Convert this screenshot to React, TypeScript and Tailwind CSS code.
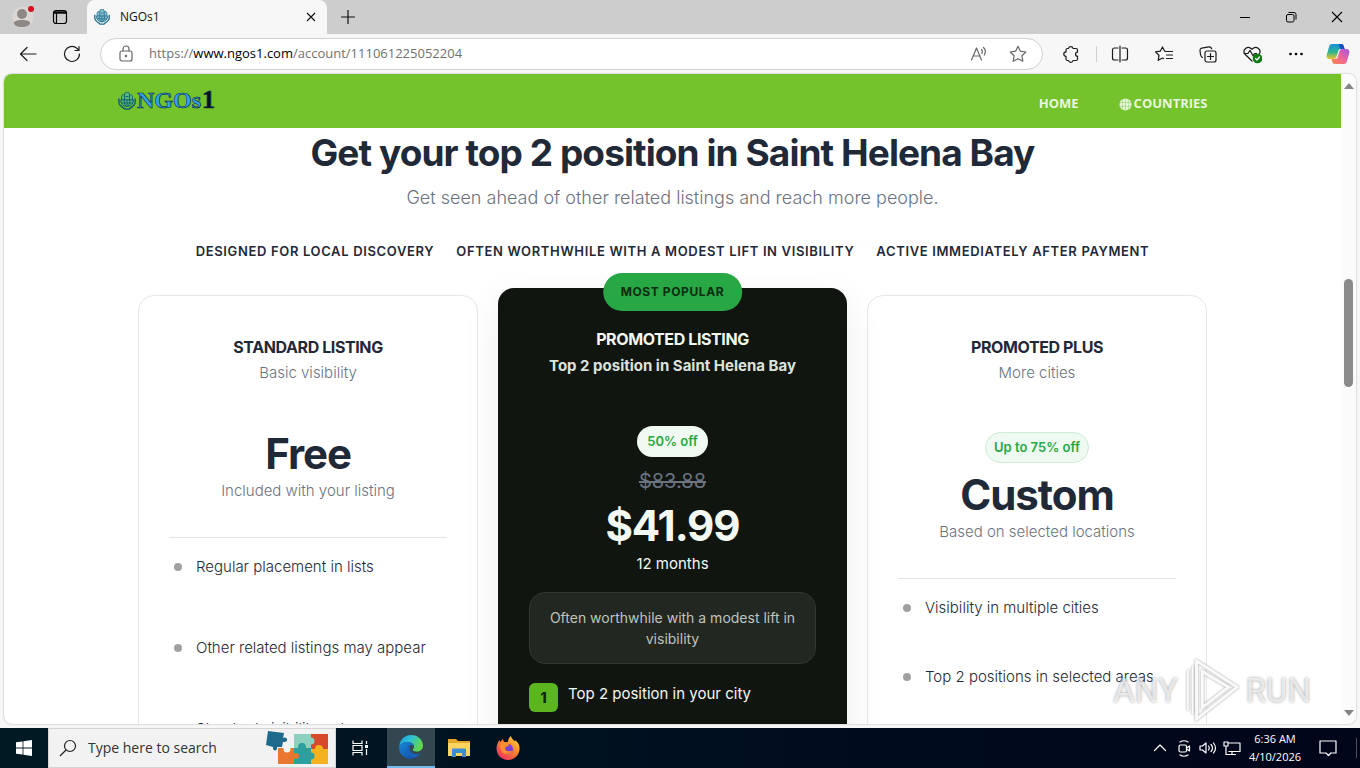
import type { ReactNode } from 'react';
import { clsx } from 'clsx';

interface Plan {
  name: string;
  tagline: string;
  badge?: string;
  price: string;
  note: string;
  features: string[];
  listClass: string;
}

const standardPlan: Plan = {
  name: 'STANDARD LISTING',
  tagline: 'Basic visibility',
  price: 'Free',
  note: 'Included with your listing',
  features: ['Regular placement in lists', 'Other related listings may appear', 'Standard visibility only'],
  listClass: 'gap-[57px]',
};

const plusPlan: Plan = {
  name: 'PROMOTED PLUS',
  tagline: 'More cities',
  badge: 'Up to 75% off',
  price: 'Custom',
  note: 'Based on selected locations',
  features: ['Visibility in multiple cities', 'Top 2 positions in selected areas'],
  listClass: 'gap-[45px]',
};

const highlights = [
  'DESIGNED FOR LOCAL DISCOVERY',
  'OFTEN WORTHWHILE WITH A MODEST LIFT IN VISIBILITY',
  'ACTIVE IMMEDIATELY AFTER PAYMENT',
];

/* Thin line icon on a 20px grid */
function Line({ children, className }: { children: ReactNode; className?: string }) {
  return (
    <svg
      viewBox="0 0 20 20"
      className={clsx('h-5 w-5 shrink-0', className)}
      fill="none"
      stroke="currentColor"
      strokeWidth="1.2"
      strokeLinecap="round"
      strokeLinejoin="round"
      aria-hidden="true"
    >
      {children}
    </svg>
  );
}

/* Globe held between two hands, with three people on top */
function GlobeHands({ className, fill, stroke }: { className?: string; fill: string; stroke: string }) {
  return (
    <svg viewBox="0 0 18 18" className={className} fill="none" stroke={stroke} strokeWidth="0.9" aria-hidden="true">
      <path d="M3.500 8V4.500a2 2 0 0 1 3-1.500V2.500a2.500 2.500 0 0 1 5 0V3a2 2 0 0 1 3 1.500V8z" fill={fill} />
      <path d="M6.500 3v5M11.500 3v5M7.500 4.500h3" />
      <path d="M2.500 8h13a6.500 6.500 0 0 1-13 0z" fill={fill} />
      <path d="M9 8v7M3 11h12M6 8q0 4 2 6.500M12 8q0 4-2 6.500" />
      <path d="M.9 6.500v4c0 2.500 3 4.500 5.500 6M17.100 6.500v4c0 2.500-3 4.500-5.500 6M6 17h6" strokeWidth="1.500" />
    </svg>
  );
}

function TabStrip() {
  return (
    <div className="flex h-[34px] shrink-0 items-stretch bg-[#cdcdcd] font-['Open_Sans',sans-serif] text-[#111]">
      <div className="flex w-[87px] items-center gap-[18px] pl-3">
        <button aria-label="Profile">
          <svg viewBox="0 0 22 22" className="h-[22px] w-[22px]" aria-hidden="true">
            <circle cx="11" cy="11" r="10.500" fill="#dad7d5" />
            <circle cx="10" cy="8" r="5" fill="#8d8886" />
            <path d="M2 17c0-2 3-3 8-3s8 1 8 3-3 4-8 4-8-2-8-4z" fill="#8d8886" />
            <circle cx="19" cy="3" r="3" fill="#d80f1e" />
          </svg>
        </button>
        <button aria-label="Tab actions">
          <svg viewBox="0 0 16 16" className="h-4 w-4" fill="none" stroke="#000" strokeWidth="1.200" aria-hidden="true">
            <rect x="1.500" y="1.500" width="13" height="13" rx="2.500" />
            <path d="M4.500 4v10" />
            <path d="M2 3.500h12" strokeWidth="2.400" />
          </svg>
        </button>
      </div>
      <div className="flex w-60 items-center rounded-t-lg bg-[#f7f7f7] pr-2 pl-[7px]">
        <GlobeHands className="h-4 w-4" fill="#86bccd" stroke="#24718f" />
        <span className="ml-[10px] flex-1 text-xs">NGOs1</span>
        <button aria-label="Close tab">
          <svg viewBox="0 0 16 16" className="h-4 w-4" stroke="#111" strokeWidth="1.100" aria-hidden="true">
            <path d="M4 4l8 8M12 4l-8 8" />
          </svg>
        </button>
      </div>
      <button aria-label="New tab" className="px-3">
        <svg viewBox="0 0 18 18" className="h-[18px] w-[18px]" stroke="#111" strokeWidth="1.200" aria-hidden="true">
          <path d="M9 2v14M2 9h14" />
        </svg>
      </button>
      <div className="ml-auto flex">
        <button aria-label="Minimize" className="flex w-[46px] items-center justify-center">
          <svg viewBox="0 0 12 12" className="h-3 w-3" stroke="#000" aria-hidden="true">
            <path d="M1 6.500h10" />
          </svg>
        </button>
        <button aria-label="Restore" className="flex w-[46px] items-center justify-center">
          <svg viewBox="0 0 12 12" className="h-3 w-3" fill="none" stroke="#000" aria-hidden="true">
            <rect x="1.500" y="3.500" width="7.500" height="7.500" rx="1.500" />
            <path d="M3.500 1.500h5.500a2 2 0 0 1 2 2v5" />
          </svg>
        </button>
        <button aria-label="Close" className="flex w-[46px] items-center justify-center">
          <svg viewBox="0 0 12 12" className="h-3 w-3" stroke="#000" strokeWidth="1.100" aria-hidden="true">
            <path d="M1 1l10 10M11 1L1 11" />
          </svg>
        </button>
      </div>
    </div>
  );
}

function Toolbar() {
  return (
    <div className="flex h-10 shrink-0 items-center bg-[#f7f7f7] pr-[10px] pl-[18px] text-[#1a1a1a]">
      <button aria-label="Back" className="mr-6">
        <Line><path d="M2.500 10H18M9 3.500L2.500 10 9 16.500" /></Line>
      </button>
      <button aria-label="Refresh" className="mr-[18px]">
        <Line><path d="M17.500 10A7.500 7.500 0 1 1 14.800 4.200L17 6.400M17 2.500v4h-4" /></Line>
      </button>
      <div className="flex h-8 flex-1 items-center rounded-full border border-[#d0d0d5] bg-white pr-[14px] pl-[15px]">
        <Line className="text-[#666]">
          <rect x="4" y="7" width="12" height="10" rx="2" />
          <path d="M7 7V5a3 3 0 0 1 6 0v2" />
          <circle cx="10" cy="12" r="0.600" fill="currentColor" />
        </Line>
        <p className="ml-[13px] flex-1 font-['Open_Sans',sans-serif] text-[13px] text-[#717171]">
          https://<span className="text-black">www.ngos1.com</span>/account/111061225052204
        </p>
        <button aria-label="Read aloud" className="mr-[19px]">
          <Line className="text-[#666]">
            <path d="M2.500 16L7.500 4l5 12M4.300 12h6.500M12.500 5.500c1 1 1 2.500.5 4M14.500 3.500c2.200 2 2.200 5 .8 7.500" />
          </Line>
        </button>
        <button aria-label="Add to favorites">
          <Line className="text-[#666]">
            <path d="M10 2.300l2.400 4.900 5.400.8-3.900 3.800.9 5.400-4.800-2.500-4.800 2.500.9-5.400L2.200 8l5.400-.8z" />
          </Line>
        </button>
      </div>
      <button aria-label="Extensions" className="ml-[18px]">
        <Line>
          <path d="M7.500 4.500a2.300 2.300 0 0 1 4.500 0h3a1.500 1.500 0 0 1 1.500 1.500V8.200a1.900 1.900 0 1 0 0 3.900V15a1.500 1.500 0 0 1-1.500 1.500h-3a2.300 2.300 0 0 1-4.500 0H6.500A1.500 1.500 0 0 1 5 15v-2.700a2.200 2.200 0 0 1 0-4.400V6a1.500 1.500 0 0 1 1.500-1.500z" />
        </Line>
      </button>
      <span className="mr-[13px] ml-[15px] h-4 w-px bg-[#cfcfcf]" />
      <button aria-label="Split screen" className="mr-6">
        <Line><path d="M8 4H4.500a2 2 0 0 0-2 2v8a2 2 0 0 0 2 2H8M12 4h3.500a2 2 0 0 1 2 2v8a2 2 0 0 1-2 2H12M10 2v16" /></Line>
      </button>
      <button aria-label="Favorites" className="mr-6">
        <Line><path d="M18.500 7.500h-6l-1.800-.3L8.500 3 6.300 7.200l-4.800.7L5 11.300l-.8 5 4.300-2.300 1 .5M12.500 11h6M12.500 14.500h6" /></Line>
      </button>
      <button aria-label="Collections" className="mr-6">
        <Line>
          <rect x="7" y="7" width="11" height="11" rx="2" />
          <path d="M12.500 9.500v6M9.500 12.500h6M4.500 13.500C3 13 2.800 12 2.500 10.500L2 6.500a2 2 0 0 1 1.700-2.300l7-1.400c1.800-.2 2.600.7 3 2" />
        </Line>
      </button>
      <button aria-label="Browser essentials" className="mr-6">
        <Line>
          <path d="M10 17L3 10.200C-.2 6 5.500 1 10 5.200 14.500 1 20.200 6 17 10.200M2 9.500h4l2-3.200 3 5.500 1.500-2.300h2" />
          <circle cx="15.500" cy="14.500" r="4.200" fill="#0f7b15" stroke="#0f7b15" />
          <path d="M13.500 14.500l1.500 1.500 2.500-3" stroke="#fff" />
        </Line>
      </button>
      <button aria-label="Settings and more" className="mr-5">
        <svg viewBox="0 0 20 20" className="h-5 w-5" aria-hidden="true">
          <circle cx="4.500" cy="10" r="1.300" /><circle cx="10" cy="10" r="1.300" /><circle cx="15.500" cy="10" r="1.300" />
        </svg>
      </button>
      <button aria-label="Copilot">
        <svg viewBox="0 0 24 24" className="h-6 w-6" aria-hidden="true">
          <defs>
            <linearGradient id="cp1" x1="0" y1="0" x2="0" y2="1">
              <stop offset="0" stopColor="#1690e0" /><stop offset=".55" stopColor="#2fb58d" /><stop offset="1" stopColor="#f2c12d" />
            </linearGradient>
            <linearGradient id="cp2" x1="1" y1="0" x2="0" y2="1">
              <stop offset="0" stopColor="#a455e8" /><stop offset=".5" stopColor="#ee6599" /><stop offset="1" stopColor="#fb8b45" />
            </linearGradient>
          </defs>
          <path d="M6 2h9c2 0 2.500 1 3 3l.6 2H15c-2 0-2.600 1-3 3l-1.200 4c-.5 2-1.300 3-3 3H4c-3 0-4-2-3-5l2-7c.6-2 1.200-3 3-3z" fill="url(#cp1)" />
          <path d="M13 2h2c2 0 2.500 1 3 3l.6 2H14z" fill="#1750c8" />
          <path d="M18 22H9c-2 0-2.500-1-3-3l-.6-2H9c2 0 2.600-1 3-3l1.200-4c.5-2 1.300-3 3-3H20c3 0 4 2 3 5l-2 7c-.6 2-1.200 3-3 3z" fill="url(#cp2)" />
        </svg>
      </button>
    </div>
  );
}

function SiteHeader() {
  return (
    <header className="bg-[#74c22c]">
      <div className="mx-auto flex h-[54px] max-w-[1140px] items-center justify-between pr-[35px] pl-[15px]">
        <a href="#home" className="flex items-center gap-px">
          <GlobeHands className="h-[18px] w-[18px]" fill="#55b67e" stroke="#12606a" />
          <svg viewBox="0 0 78 24" className="h-6 w-[78px]" role="img" aria-label="NGOs1">
            <g fontFamily="Liberation Serif, serif" fontWeight="700" stroke="#0d3050" strokeWidth="0.700">
              <text x="0" y="19" fontSize="24" fill="#35a4ea">
                NGOs
              </text>
              <text x="65" y="19" fontSize="26" fill="#04121c">
                1
              </text>
            </g>
          </svg>
        </a>
        <nav className="flex gap-10 pt-[6px] font-['Open_Sans',sans-serif] text-[13px] font-bold text-[#eaf7dc]">
          <a href="#home">HOME</a>
          <a href="#countries" className="flex items-center gap-[2px]">
            <svg viewBox="0 0 14 14" className="h-[13px] w-[13px]" aria-hidden="true">
              <circle cx="7" cy="7" r="6.500" fill="#eaf7dc" />
              <path d="M7 .5v13M.5 5h13M.5 9h13M4.500 1.500c-1.500 3.500-1.500 7.500 0 11M9.500 1.500c1.500 3.500 1.500 7.500 0 11" fill="none" stroke="#9ccf6d" strokeWidth=".7" />
            </svg>
            COUNTRIES
          </a>
        </nav>
      </div>
    </header>
  );
}

function PlanCard({ plan }: { plan: Plan }) {
  return (
    <article className="mt-[7px] min-h-[520px] rounded-2xl border border-[#e5e7eb] bg-white px-[30px] pt-[39px] text-center">
      <h2 className="text-base leading-6 font-bold tracking-tight">{plan.name}</h2>
      <p className="mt-[2px] text-[15px] leading-6 font-light text-[#6b7280]">{plan.tagline}</p>
      <div className={clsx('border-b border-[#e2e4e8] pb-[34px]', plan.badge ? 'pt-[47px]' : 'pt-[45px]')}>
        {plan.badge && (
          <span className="mx-auto mb-2 flex h-[31px] w-fit items-center rounded-full border border-[#cdebd4] bg-[#eef9f1] px-2 text-[13px] font-semibold text-[#28a745]">
            {plan.badge}
          </span>
        )}
        <p className="text-[42px] leading-[48px] font-bold tracking-tight">{plan.price}</p>
        <p className="mt-px text-[15px] leading-6 font-light text-[#6b7280]">{plan.note}</p>
      </div>
      <ul className={clsx('flex flex-col pt-[17px] pl-[5px] text-left text-[15px] leading-6 font-light', plan.listClass)}>
        {plan.features.map((feature) => (
          <li key={feature} className="flex items-center gap-[14px] whitespace-nowrap">
            <span className="h-2 w-2 rounded-full bg-[#a0a0a0]" />
            {feature}
          </li>
        ))}
      </ul>
    </article>
  );
}

function PromotedCard() {
  return (
    <article className="relative min-h-[527px] rounded-2xl bg-[#101510] px-[31px] pt-[39px] text-center text-[#f3f8f2] shadow-[0_12px_40px_rgba(0,0,0,0.07)]">
      <span className="absolute -top-[15px] left-1/2 flex h-[38px] -translate-x-1/2 items-center rounded-full bg-[#28a745] px-[18px] text-xs font-bold tracking-wider whitespace-nowrap text-[#0b2d10]">
        MOST POPULAR
      </span>
      <h2 className="text-base leading-6 font-bold tracking-tight">PROMOTED LISTING</h2>
      <p className="mt-[3px] text-[15px] leading-6 font-bold text-[#dde1dc]">Top 2 position in Saint Helena Bay</p>
      <span className="mx-auto mt-12 flex h-[31px] w-fit items-center rounded-full bg-[#f0faf2] px-[10px] text-[13px] font-semibold text-[#28a745]">
        50% off
      </span>
      <p className="mt-[10px] text-xl leading-7 text-[#6b7280] line-through">$83.88</p>
      <p className="mt-[7px] text-[42px] leading-[48px] font-bold tracking-tight">$41.99</p>
      <p className="mt-[2px] text-[15px] leading-6">12 months</p>
      <p className="mt-4 rounded-2xl border border-[#323732] bg-[#222722] px-4 py-[14px] text-sm leading-[21px] text-[#bfc4be]">
        Often worthwhile with a modest lift in visibility
      </p>
      <ul className="mt-[19px] flex flex-col gap-3 text-left text-[15px] leading-[22px]">
        <li className="flex gap-[10px]">
          <span className="flex h-[29px] w-[29px] items-center justify-center rounded-md bg-[#5bb51f] text-sm font-extrabold text-[#0d2608]">1</span>
          Top 2 position in your city
        </li>
      </ul>
    </article>
  );
}

function Watermark() {
  return (
    <div className="pointer-events-none absolute right-[45px] bottom-[2px] flex items-center gap-[5px] font-['Roboto',sans-serif] text-[33px] leading-none text-white/70 [text-shadow:0_0_3px_rgba(0,0,0,0.4)]">
      <span>ANY</span>
      <svg viewBox="0 0 60 66" className="h-16 w-[58px] drop-shadow-[0_0_1px_rgba(0,0,0,0.4)]" fill="none" stroke="#fafafa" strokeWidth="3" aria-hidden="true">
        <path d="M14 3l42 27-42 33z" />
        <path d="M20 14v37l27-21z" />
        <path d="M5 12v42M10 8v50" strokeWidth="2" />
      </svg>
      <span>RUN</span>
    </div>
  );
}

function Scrollbar() {
  return (
    <div className="flex w-[15px] shrink-0 flex-col items-center bg-[#fbfbfb] pt-[9px] pb-2" aria-hidden="true">
      <svg viewBox="0 0 10 6" className="h-[6px] w-[10px]" fill="#858585"><path d="M5 0l5 6H0z" /></svg>
      <div className="mt-[190px] h-[108px] w-[9px] rounded-full bg-[#8b8b8b]" />
      <svg viewBox="0 0 10 6" className="mt-auto h-[6px] w-[10px]" fill="#858585"><path d="M5 6L0 0h10z" /></svg>
    </div>
  );
}

function Taskbar() {
  return (
    <footer className="flex h-10 shrink-0 bg-linear-to-r from-[#001a24] to-[#00051a] font-['Open_Sans',sans-serif] text-white">
      <button aria-label="Start" className="flex w-12 items-center justify-center">
        <svg viewBox="0 0 16 16" className="h-4 w-4" fill="#fff" aria-hidden="true">
          <path d="M0 2.300L6.600 1.400v6.200H0zM7.400 1.300L16 0v7.600H7.400zM0 8.400h6.600v6.200L0 13.700zM7.400 8.400H16V16l-8.600-1.300z" />
        </svg>
      </button>
      <label className="flex w-72 items-center border border-[#d5d5d5] bg-[#f2f2f2] pl-[10px] text-[#222]">
        <svg viewBox="0 0 18 18" className="h-[18px] w-[18px] shrink-0" fill="none" stroke="#222" strokeWidth="1.200" aria-hidden="true">
          <circle cx="11" cy="7" r="5.500" /><path d="M7 11l-6 6" />
        </svg>
        <input type="text" aria-label="Search" placeholder="Type here to search" className="ml-[11px] w-[177px] bg-transparent text-sm outline-none placeholder:text-[#333]" />
        <svg viewBox="0 0 64 36" className="h-9 w-16 shrink-0" aria-hidden="true">
          <path d="M29 4h17v14H29z" fill="#8ed0c0" />
          <path d="M46 4h17v15H46z" fill="#d8482a" />
          <path d="M13 18h18v16H13z" fill="#e9772f" />
          <path d="M29 18h18v16H29z" fill="#2e9f9f" />
          <path d="M46 19h17v15H46z" fill="#f5b21f" />
          <circle cx="37" cy="17" r="4" fill="#2e9f9f" /><circle cx="46" cy="11" r="3.500" fill="#8ed0c0" />
          <circle cx="54" cy="19" r="4" fill="#f5b21f" /><circle cx="46" cy="26" r="3.500" fill="#2e9f9f" />
          <circle cx="22" cy="19" r="3.500" fill="#f2f2f2" /><circle cx="31" cy="26" r="3" fill="#e9772f" />
          <path d="M3 1l16 2-1 5c4-2 6 3 2 4l-2 0-1 5-5 0c1 5-5 4-4 0L1 15z" fill="#1e6a8c" />
        </svg>
      </label>
      <button aria-label="Task view" className="flex w-12 items-center justify-center">
        <svg viewBox="0 0 18 18" className="h-[18px] w-[18px]" fill="none" stroke="#fff" strokeWidth="1.200" aria-hidden="true">
          <path d="M2 1.500v3h9v-3M2 16.500v-3h9v3M2 6.500h9v5H2zM15.500 2v3M15.500 10v6" />
          <path d="M14 6h3v3h-3z" fill="#fff" stroke="none" />
        </svg>
      </button>
      <button aria-label="Microsoft Edge" className="ml-[3px] flex w-12 items-center justify-center border-b-2 border-[#76b9ed] bg-[#34464f]">
        <svg viewBox="0 0 24 24" className="h-6 w-6" aria-hidden="true">
          <defs>
            <linearGradient id="edgeTop" x1="0" y1="0" x2="1" y2=".4">
              <stop offset="0" stopColor="#1c9de2" /><stop offset=".5" stopColor="#2fc2d4" /><stop offset="1" stopColor="#62d64b" />
            </linearGradient>
            <linearGradient id="edgeLow" x1="0" y1="0" x2="1" y2="1">
              <stop offset="0" stopColor="#1686d9" /><stop offset="1" stopColor="#104a9e" />
            </linearGradient>
          </defs>
          <path d="M.2 11C1 4.500 6 0 12 0c7 0 12 5 12 10.500 0 4-3 6-6.500 6-2.500 0-3.800-.8-3.800-1.500 0-.8 1.300-1.200 1.300-3.200C15 9 12 7 8.500 7 4.500 7 1.500 9 .2 11z" fill="url(#edgeTop)" />
          <path d="M.1 12C.8 9 4 7 8.500 7c3.500 0 5.800 1.600 6.400 3.600-4-1.600-7 1.400-6.200 5 .8 3.800 4.800 6.400 10 5.200C16.500 23 14.500 24 12 24 5 24-.3 18.500.1 12z" fill="url(#edgeLow)" />
          <path d="M9 12c-3 5 1 10.500 6.500 10.200 3-.2 5-1.700 6.800-4-2.800 1.600-7.300 1.400-9.800-.7C11 16 10 14 11 11.500z" fill="#1763b8" />
        </svg>
      </button>
      <button aria-label="File Explorer" className="flex w-12 items-center justify-center">
        <svg viewBox="0 0 22 20" className="h-5 w-[22px]" aria-hidden="true">
          <path d="M0 1h8l2 2h12v15H0z" fill="#e5a82a" />
          <path d="M0 5h22v13H0z" fill="#fcd462" />
          <path d="M4 11.500q0-1 1-1h12q1 0 1 1V19h-4v-4H8v4H4z" fill="#3b8fd0" />
        </svg>
      </button>
      <button aria-label="Firefox" className="flex w-[50px] items-center justify-center">
        <svg viewBox="0 0 24 24" className="h-6 w-6" aria-hidden="true">
          <defs>
            <linearGradient id="fox" x1="1" y1="0" x2=".2" y2="1">
              <stop offset="0" stopColor="#ffe84a" /><stop offset=".45" stopColor="#ff8a2a" /><stop offset="1" stopColor="#ef2d62" />
            </linearGradient>
          </defs>
          <path d="M3.500 4c.2 1 .5 1.500 1 2 .6-1.300 1.500-2.300 2.500-3 0 1.200.4 2 1.500 3H12c0-2.500 1-4.500 3-6 .5 2.500 2 3.700 4 5.500 0-.8-.2-1-.3-1.500C22 6 24 9 23.500 13.500 23 19.500 18 24 12 24 5.500 24 .5 19 .5 12.500.5 9 2 6 3.500 4z" fill="url(#fox)" />
          <circle cx="12" cy="13" r="5" fill="#7a3fd6" />
          <path d="M4 8c3-2 6-2 8 0l1.500 1.300c-2 1.200-3 1.200-4 2-1 1.700.5 4 3 4 1.500 0 2.500-.7 3.500 0-1 2-4 3.500-7 2.500C5.500 17 4 13 4 8z" fill="#ff8f2c" />
        </svg>
      </button>
      <div className="ml-auto flex items-center">
        <div className="flex items-center gap-1">
          <button aria-label="Show hidden icons"><Line><path d="M4.500 12.500L10 7l5.500 5.500" /></Line></button>
          <button aria-label="Meet now">
            <Line><rect x="5" y="7" width="7.500" height="7" rx="1.500" /><path d="M12.500 10l3-2v5l-3-2M6 4q4-2.500 8 0M6 17q4 2.500 8 0" /></Line>
          </button>
          <button aria-label="Volume">
            <Line><path d="M2 8h2.500L8 5v10l-3.500-3H2zM10.500 8q1.500 2 0 4M13 6.500q3 3.500 0 7M15.500 5q4 5 0 10" /></Line>
          </button>
          <button aria-label="Network">
            <Line><path d="M6 5h12v8.500H6.500M2 4h4v4H2zM4 8v8.500h10M10 13.500v3" strokeLinecap="butt" /></Line>
          </button>
        </div>
        <time className="w-[66px] text-center text-[11px] leading-[18px]">
          6:36 AM
          <br />
          4/10/2026
        </time>
        <button aria-label="Notifications" className="ml-[10px] border-r border-[#46505a] pr-[18px]">
          <Line><path d="M2 3h16v12h-5l-2.500 2.500L8 15H2z" /></Line>
        </button>
        <span className="w-[3px]" />
      </div>
    </footer>
  );
}

export default function App() {
  return (
    <div className="flex h-screen flex-col overflow-hidden bg-[#f7f7f7]">
      <TabStrip />
      <Toolbar />
      <div className="relative mx-1 mb-1 flex min-h-0 flex-1 overflow-hidden rounded-lg bg-white shadow-[0_0_2px_rgba(0,0,0,0.35)]">
        <div className="min-w-0 flex-1 overflow-hidden font-['Inter',sans-serif] text-[#1f2937]">
          <SiteHeader />
          <main className="mx-auto max-w-[1069px]">
            <h1 className="text-center text-[37px] leading-[50px] font-bold tracking-tight">Get your top 2 position in Saint Helena Bay</h1>
            <p className="mt-[6px] text-center text-lg leading-7 font-light text-[#6b7280]">
              Get seen ahead of other related listings and reach more people.
            </p>
            <ul className="mt-[29px] flex justify-center gap-[22px] text-[13px] leading-5 font-semibold tracking-wider whitespace-nowrap">
              {highlights.map((text) => (
                <li key={text}>{text}</li>
              ))}
            </ul>
            <div className="mt-[27px] grid grid-cols-[340fr_349fr_340fr] gap-5">
              <PlanCard plan={standardPlan} />
              <PromotedCard />
              <PlanCard plan={plusPlan} />
            </div>
          </main>
        </div>
        <Scrollbar />
        <Watermark />
      </div>
      <Taskbar />
    </div>
  );
}
